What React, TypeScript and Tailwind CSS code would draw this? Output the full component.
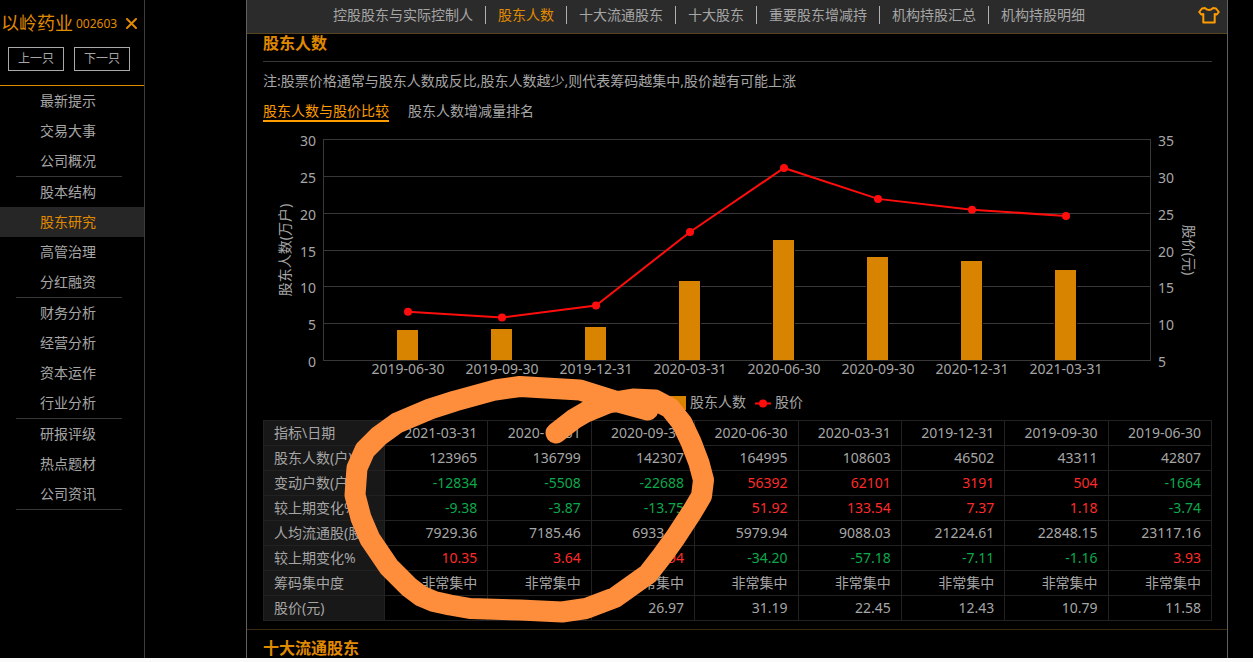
import React from "react";

const menuGroups: string[][] = [
  ["最新提示", "交易大事", "公司概况"],
  ["股本结构", "股东研究", "高管治理", "分红融资"],
  ["财务分析", "经营分析", "资本运作", "行业分析"],
  ["研报评级", "热点题材", "公司资讯"],
];

const sections = [
  "控股股东与实际控制人",
  "股东人数",
  "十大流通股东",
  "十大股东",
  "重要股东增减持",
  "机构持股汇总",
  "机构持股明细",
];

const dates = [
  "2021-03-31",
  "2020-12-31",
  "2020-09-30",
  "2020-06-30",
  "2020-03-31",
  "2019-12-31",
  "2019-09-30",
  "2019-06-30",
];

const rows: { label: string; signed?: boolean; values: string[] }[] = [
  { label: "股东人数(户)", values: ["123965", "136799", "142307", "164995", "108603", "46502", "43311", "42807"] },
  { label: "变动户数(户)", signed: true, values: ["-12834", "-5508", "-22688", "56392", "62101", "3191", "504", "-1664"] },
  { label: "较上期变化%", signed: true, values: ["-9.38", "-3.87", "-13.75", "51.92", "133.54", "7.37", "1.18", "-3.74"] },
  { label: "人均流通股(股)", values: ["7929.36", "7185.46", "6933.94", "5979.94", "9088.03", "21224.61", "22848.15", "23117.16"] },
  { label: "较上期变化%", signed: true, values: ["10.35", "3.64", "15.94", "-34.20", "-57.18", "-7.11", "-1.16", "3.93"] },
  { label: "筹码集中度", values: Array(8).fill("非常集中") },
  { label: "股价(元)", values: ["24.65", "25.49", "26.97", "31.19", "22.45", "12.43", "10.79", "11.58"] },
];

const holders = [4.2807, 4.3311, 4.6502, 10.8603, 16.4995, 14.2307, 13.6799, 12.3965];
const prices = [11.58, 10.79, 12.43, 22.45, 31.19, 26.97, 25.49, 24.65];
const gridY = [14, 51, 88, 125, 161, 198, 235];

function Sidebar() {
  return (
    <aside className="w-[145px] shrink-0 border-r border-[#3c3c3c]">
      <div className="h-[85px] pt-2">
        <div className="flex h-[30px] items-center whitespace-nowrap pl-px text-[#e08a00]">
          <h1 className="text-[18px]">以岭药业</h1>
          <span className="ml-[3px] pt-px text-[12px]">002603</span>
          <button type="button" aria-label="关闭" className="ml-[9px]">
            <svg width="11" height="11" viewBox="0 0 11 11" stroke="currentColor" strokeWidth="2" strokeLinecap="round">
              <path d="M1 1l9 9M10 1l-9 9" />
            </svg>
          </button>
        </div>
        <div className="mt-[9px] flex gap-[10px] pl-2">
          <button type="button" className="h-6 w-14 border border-[#aaaaaa] text-[12px] leading-[22px]">上一只</button>
          <button type="button" className="h-6 w-14 border border-[#aaaaaa] text-[12px] leading-[22px]">下一只</button>
        </div>
      </div>
      <nav className="border-t border-[#e08a00]">
        {menuGroups.map((group) => (
          <ul key={group[0]}>
            {group.map((item) => (
              <li key={item}>
                <a
                  href="#"
                  className={
                    item === "股东研究"
                      ? "block h-[30px] bg-[#262626] pl-10 leading-[30px] text-[#e08a00]"
                      : "block h-[30px] pl-10 leading-[30px]"
                  }
                >
                  {item}
                </a>
              </li>
            ))}
            <li aria-hidden="true" className="ml-4 mr-[22px] border-b border-[#383838]" />
          </ul>
        ))}
      </nav>
    </aside>
  );
}

function SectionBar() {
  return (
    <header className="flex h-[34px] shrink-0 items-center border-b border-[#5a4420] bg-[#2b2b2b] pb-[3px]">
      <nav className="flex flex-1 justify-center whitespace-nowrap">
        {sections.map((name) => (
          <a
            key={name}
            href="#"
            className={
              name === "股东人数"
                ? "border-r border-[#b0b0b0] px-3 leading-[18px] text-[#e08a00]"
                : "border-r border-[#b0b0b0] px-3 leading-[18px] last:border-r-0"
            }
          >
            {name}
          </a>
        ))}
      </nav>
      <button type="button" aria-label="换肤" className="flex w-14 justify-end pr-[7px]">
        <svg width="22" height="18" viewBox="0 0 22 18" fill="none" stroke="#ff9c00" strokeWidth="2" strokeLinejoin="round">
          <path d="M7 2 L4 2.500 L1.200 6 L3.200 8.500 L5.300 8 V16.500 H16.700 V8 L18.800 8.500 L20.800 6 L18 2.500 L15 2 C13.500 4.500 8.500 4.500 7 2 Z" />
        </svg>
      </button>
    </header>
  );
}

function Chart() {
  const points = prices.map((p, i) => [145 + 94 * i, 235 - ((p - 5) / 30) * 220]);
  return (
    <svg viewBox="0 0 949 295" className="block w-full" fontSize="14" fill="#a6a6a6" role="img" aria-label="股东人数与股价比较">
      <g stroke="#383838" shapeRendering="crispEdges">
        {gridY.map((y) => (
          <path key={y} d={`M60 ${y + 0.5}H888`} />
        ))}
        <path d="M60.5 14V235M887.5 14V235" />
      </g>
      {gridY.map((y, i) => (
        <g key={y}>
          <text x="53" y={y + 7} textAnchor="end">{30 - i * 5}</text>
          <text x="895" y={y + 7}>{35 - i * 5}</text>
        </g>
      ))}
      {holders.map((h, i) => {
        const height = Math.round((h / 30) * 220) - 1;
        return (
          <g key={i} shapeRendering="crispEdges">
            <rect x={133 + 94 * i} y={234 - height} width="23" height={height + 1} fill="#000" />
            <rect x={134 + 94 * i} y={235 - height} width="21" height={height} fill="#d98400" />
          </g>
        );
      })}
      <polyline points={points.map((p) => p.join(",")).join(" ")} fill="none" stroke="#ff0d0d" strokeWidth="2" />
      {points.map(([x, y]) => (
        <circle key={x} cx={x} cy={y} r="4" fill="#ff0d0d" />
      ))}
      {[...dates].reverse().map((d, i) => (
        <text key={d} x={145 + 94 * i} y="249" textAnchor="middle">{d}</text>
      ))}
      <text transform="translate(27 125) rotate(-90)" textAnchor="middle">股东人数(万户)</text>
      <text transform="translate(921 125) rotate(90)" textAnchor="middle">股价(元)</text>
      <rect x="398" y="271" width="25" height="14" fill="#d98400" />
      <text x="427" y="282">股东人数</text>
      <path d="M492 278.5H508" stroke="#ff0d0d" strokeWidth="2" />
      <circle cx="500" cy="278.5" r="4" fill="#ff0d0d" />
      <text x="512" y="282">股价</text>
    </svg>
  );
}

function valueColor(value: string, signed?: boolean) {
  if (!signed) return "border border-[#222222] px-[10px] text-right";
  return value.startsWith("-")
    ? "border border-[#222222] px-[10px] text-right text-[#0ca84c]"
    : "border border-[#222222] px-[10px] text-right text-[#ff2a2a]";
}

function HolderTable() {
  return (
    <div className="relative">
      <table className="w-full table-fixed border-collapse whitespace-nowrap">
        <thead>
          <tr className="h-[25px] leading-6">
            <th scope="col" className="w-[121px] border border-[#222222] bg-[#181818] pl-[10px] text-left font-normal">指标\日期</th>
            {dates.map((d) => (
              <th key={d} scope="col" className="border border-[#222222] px-[10px] text-right font-normal">{d}</th>
            ))}
          </tr>
        </thead>
        <tbody>
          {rows.map((row, r) => (
            <tr key={r} className="h-[25px] leading-6">
              <th scope="row" className="border border-[#222222] bg-[#181818] pl-[10px] text-left font-normal">{row.label}</th>
              {row.values.map((v, i) => (
                <td key={i} className={valueColor(v, row.signed)}>{v}</td>
              ))}
            </tr>
          ))}
        </tbody>
      </table>
      <svg
        className="pointer-events-none absolute -top-[50px] left-[77px]"
        width="380"
        height="260"
        viewBox="340 370 380 260"
        fill="none"
        stroke="#ff8e3c"
        strokeWidth="21"
        strokeLinecap="round"
        strokeLinejoin="round"
        aria-hidden="true"
      >
        <path d="M648 410L615 401L580 390L520 386.500L495 390L455 401L430 409L397 423L379 436L365 450L357 468L355 495L361 518L370 539L389 567L409 587L421 596L434 601.500L450 605L470 608.500L520 610L562 612L586 608.500L615 597.500L648 574L662 556L675 538L692 512L701.500 496L703.500 480L699 463L691 442L682 423L670 408L655 400L633 399L608 403L586 412L574 419L556 433" />
      </svg>
    </div>
  );
}

export default function App() {
  return (
    <div className="flex h-screen overflow-hidden border-b-4 border-[#fafafa] bg-black font-['Noto_Sans','Noto_Sans_CJK_SC',sans-serif] text-[14px] leading-5 text-[#a6a6a6]">
      <Sidebar />
      <main className="ml-[101px] mr-[25px] flex min-w-0 flex-1 flex-col overflow-hidden border-x border-[#606060]">
        <SectionBar />
        <section className="pb-2 pl-4 pr-[15px]">
          <h2 className="h-7 border-b border-[#383838] text-[16px] font-bold leading-[18px] text-[#e08a00]">股东人数</h2>
          <p className="pt-[9px]">注:股票价格通常与股东人数成反比,股东人数越少,则代表筹码越集中,股价越有可能上涨</p>
          <div className="flex gap-[19px] pt-[10px]">
            <button type="button" className="h-[21px] border-b-2 border-[#ff9c00] text-[#ff9c00]">股东人数与股价比较</button>
            <button type="button" className="h-[21px] border-b-2 border-transparent">股东人数增减量排名</button>
          </div>
          <div className="mt-[3px]">
            <Chart />
          </div>
          <HolderTable />
        </section>
        <section className="border-t border-[#3c2a10] px-4 pt-2">
          <h2 className="text-[16px] font-bold leading-5 text-[#e08a00]">十大流通股东</h2>
        </section>
      </main>
    </div>
  );
}
